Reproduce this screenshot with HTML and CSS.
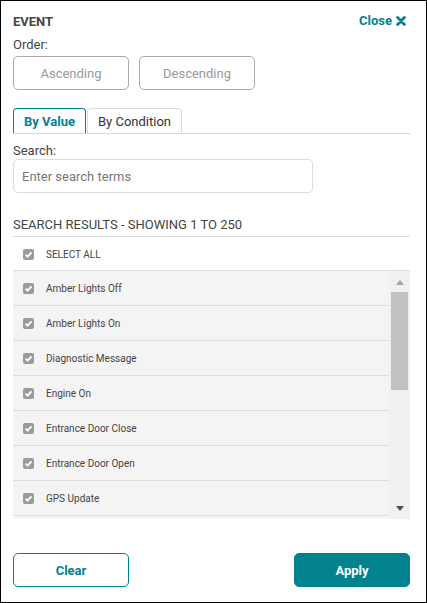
FILE: index.html
```html
<!DOCTYPE html>
<html lang="en">
<head>
<meta charset="utf-8">
<title>Event filter</title>
<link rel="stylesheet" href="styles.css">
</head>
<body>
<div class="panel">
  <div class="header">
    <span class="title">EVENT</span>
    <a class="close">Close
      <svg class="close-icon" width="10" height="10" viewBox="0 0 10 10"><path d="M1.6 1.6 L8.4 8.4 M8.4 1.6 L1.6 8.4" stroke="#00828f" stroke-width="2.8" stroke-linecap="round"/></svg>
    </a>
  </div>
  <div class="label">Order:</div>
  <div class="order">
    <button class="btn-order">Ascending</button>
    <button class="btn-order">Descending</button>
  </div>
  <div class="tabs">
    <div class="tab active">By Value</div>
    <div class="tab">By Condition</div>
  </div>
  <div class="label label-search">Search:</div>
  <input class="search" type="text" placeholder="Enter search terms">
  <div class="results-head">SEARCH RESULTS - SHOWING 1 TO 250</div>
  <div class="select-all">
    <svg class="cb" width="11" height="11" viewBox="0 0 11 11"><rect width="11" height="11" rx="2" fill="#9b9b9b"/><path d="M2.6 5.7 L4.6 7.7 L8.5 3.4" fill="none" stroke="#fff" stroke-width="1.8"/></svg>
    <span>SELECT ALL</span>
  </div>
  <div class="list">
    <div class="rows">
      <div class="row"><svg class="cb" width="11" height="11" viewBox="0 0 11 11"><rect width="11" height="11" rx="2" fill="#9b9b9b"/><path d="M2.6 5.7 L4.6 7.7 L8.5 3.4" fill="none" stroke="#fff" stroke-width="1.8"/></svg><span>Amber Lights Off</span></div>
      <div class="row"><svg class="cb" width="11" height="11" viewBox="0 0 11 11"><rect width="11" height="11" rx="2" fill="#9b9b9b"/><path d="M2.6 5.7 L4.6 7.7 L8.5 3.4" fill="none" stroke="#fff" stroke-width="1.8"/></svg><span>Amber Lights On</span></div>
      <div class="row"><svg class="cb" width="11" height="11" viewBox="0 0 11 11"><rect width="11" height="11" rx="2" fill="#9b9b9b"/><path d="M2.6 5.7 L4.6 7.7 L8.5 3.4" fill="none" stroke="#fff" stroke-width="1.8"/></svg><span>Diagnostic Message</span></div>
      <div class="row"><svg class="cb" width="11" height="11" viewBox="0 0 11 11"><rect width="11" height="11" rx="2" fill="#9b9b9b"/><path d="M2.6 5.7 L4.6 7.7 L8.5 3.4" fill="none" stroke="#fff" stroke-width="1.8"/></svg><span>Engine On</span></div>
      <div class="row"><svg class="cb" width="11" height="11" viewBox="0 0 11 11"><rect width="11" height="11" rx="2" fill="#9b9b9b"/><path d="M2.6 5.7 L4.6 7.7 L8.5 3.4" fill="none" stroke="#fff" stroke-width="1.8"/></svg><span>Entrance Door Close</span></div>
      <div class="row"><svg class="cb" width="11" height="11" viewBox="0 0 11 11"><rect width="11" height="11" rx="2" fill="#9b9b9b"/><path d="M2.6 5.7 L4.6 7.7 L8.5 3.4" fill="none" stroke="#fff" stroke-width="1.8"/></svg><span>Entrance Door Open</span></div>
      <div class="row"><svg class="cb" width="11" height="11" viewBox="0 0 11 11"><rect width="11" height="11" rx="2" fill="#9b9b9b"/><path d="M2.6 5.7 L4.6 7.7 L8.5 3.4" fill="none" stroke="#fff" stroke-width="1.8"/></svg><span>GPS Update</span></div>
    </div>
    <div class="scrollbar">
      <div class="sb-btn"><span class="arrow-up"></span></div>
      <div class="sb-thumb"></div>
      <div class="sb-track"></div>
      <div class="sb-btn"><span class="arrow-down"></span></div>
    </div>
  </div>
  <div class="footer">
    <button class="btn-clear">Clear</button>
    <button class="btn-apply">Apply</button>
  </div>
</div>
</body>
</html>
```
FILE: styles.css
```css
* { box-sizing: border-box; }
body {
  margin: 0;
  font-family: Roboto, "Liberation Sans", sans-serif;
  color: #444;
  background: #fff;
}
.panel {
  width: 427px;
  height: 603px;
  border: 1px solid #000;
  padding: 13px 16px 0 12px;
  display: flex;
  flex-direction: column;
}
.header {
  display: flex;
  justify-content: space-between;
  align-items: flex-start;
  height: 16px;
  line-height: 16px;
  padding-right: 4px;
}
.title {
  font-size: 13px;
  font-weight: 700;
  color: #444;
}
.close {
  font-size: 13px;
  font-weight: 700;
  color: #00828f;
  display: flex;
  align-items: center;
  gap: 4px;
  margin-top: -1px;
}
.close-icon { display: block; }
.label {
  font-size: 13px;
  line-height: 16px;
  margin-top: 7px;
}
.order {
  display: flex;
  gap: 10px;
  margin-top: 3px;
}
.btn-order {
  width: 116px;
  height: 34px;
  border: 1px solid #a9a9a9;
  border-radius: 5px;
  background: #fff;
  color: #9a9a9a;
  font-family: Roboto, "Liberation Sans", sans-serif;
  font-size: 13px;
  padding: 0;
}
.tabs {
  display: flex;
  gap: 1px;
  margin-top: 18px;
  border-bottom: 1px solid #d9d9d9;
}
.tab {
  height: 25px;
  padding: 5px 10px 0;
  line-height: 16px;
  font-size: 13px;
  color: #333;
  border: 1px solid #dcdcdc;
  border-bottom: none;
  border-radius: 4px 4px 0 0;
}
.tab.active {
  color: #00828f;
  font-weight: 700;
  border-color: #00828f;
}
.label-search { margin-top: 9px; }
.search {
  display: block;
  width: 300px;
  height: 34px;
  border: 1px solid #ddd;
  border-radius: 5px;
  padding: 0 8px;
  font-family: Roboto, "Liberation Sans", sans-serif;
  font-size: 13px;
  color: #444;
  outline: none;
}
.search::placeholder { color: #777; }
.results-head {
  margin-top: 24px;
  font-size: 13px;
  line-height: 16px;
  padding-bottom: 3px;
  border-bottom: 1px solid #ddd;
}
.select-all, .row {
  display: flex;
  align-items: center;
  gap: 12px;
  padding-left: 10px;
  font-size: 10px;
  color: #444;
  border-bottom: 1px solid #ddd;
}
.select-all { height: 34px; padding-top: 1px; }
.row { height: 35px; flex-shrink: 0; }
.cb { display: block; flex-shrink: 0; }
.list {
  display: flex;
  height: 248px;
  background: #f4f4f4;
}
.rows {
  flex: 1;
  overflow: hidden;
  display: flex;
  flex-direction: column;
}
.scrollbar {
  width: 21px;
  background: #f1f1f1;
  display: flex;
  flex-direction: column;
}
.sb-btn {
  height: 21px;
  display: flex;
  align-items: center;
  justify-content: center;
}
.arrow-up {
  width: 0; height: 0;
  border-left: 4.5px solid transparent;
  border-right: 4.5px solid transparent;
  border-bottom: 5px solid #a3a3a3;
  margin-top: 1px;
}
.arrow-down {
  width: 0; height: 0;
  border-left: 4.5px solid transparent;
  border-right: 4.5px solid transparent;
  border-top: 5px solid #505050;
}
.sb-thumb {
  height: 98px;
  margin: 0 2px;
  background: #c1c1c1;
}
.sb-track { flex: 1; }
.footer {
  display: flex;
  justify-content: space-between;
  margin-top: 34px;
}
.footer button {
  width: 116px;
  height: 34px;
  border-radius: 5px;
  font-family: Roboto, "Liberation Sans", sans-serif;
  font-size: 13px;
  font-weight: 700;
  padding: 0;
}
.btn-clear {
  background: #fff;
  color: #00828f;
  border: 1px solid #00828f;
}
.btn-apply {
  background: #00828f;
  color: #fff;
  border: 1px solid #00828f;
}
```
